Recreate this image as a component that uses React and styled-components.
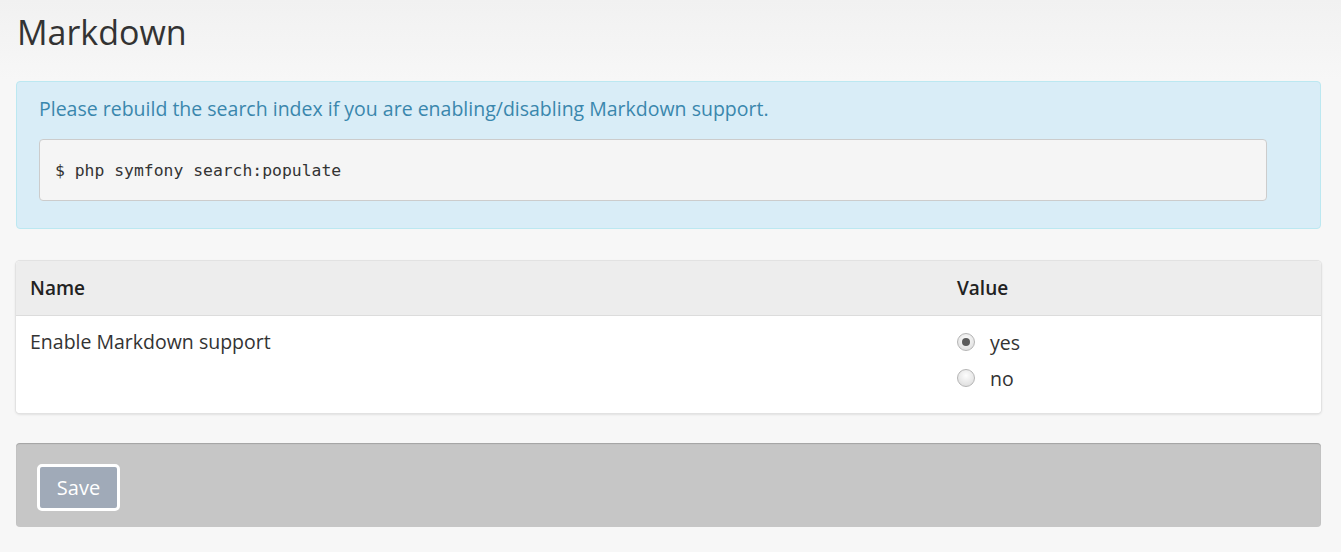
import styled, { createGlobalStyle } from "styled-components";

const Global = createGlobalStyle`
	html, body {
		margin: 0;
		padding: 0;
	}
	body {
		background: linear-gradient(#f1f1f1, #f7f7f7 80px);
		font-family: "Open Sans", "Liberation Sans", sans-serif;
		color: #333;
		min-height: 552px;
	}
`;

// --------------------------------------------------

const Page = styled.div`
	padding: 8px 20px 25px 16px;
	display: flex;
	flex-direction: column;
`;

const Title = styled.h1`
	margin: 0 0 0 1px;
	font-size: 34px;
	font-weight: 400;
	line-height: 48px;
	color: #333;
`;

const Alert = styled.div`
	margin-top: 25px;
	background: #d9edf7;
	border: 1px solid #bce8f1;
	border-radius: 4px;
	padding: 13px 53px 27px 22px;
	color: #3a87ad;
	font-size: 19.5px;
`;

const AlertText = styled.p`
	margin: 0;
	line-height: 28px;
`;

const Pre = styled.pre`
	margin: 16px 0 0 0;
	background: #f5f5f5;
	border: 1.5px solid #ccc;
	border-radius: 4px;
	padding: 0 15px;
	height: 62px;
	box-sizing: border-box;
	display: flex;
	align-items: center;
	font-family: "DejaVu Sans Mono", "Liberation Mono", monospace;
	font-size: 16.4px;
	color: #333;
`;

// --------------------------------------------------

const Table = styled.div`
	margin-top: 32px;
	background: #fff;
	border-radius: 4px;
	box-shadow: 0 0 0 1px #e2e2e2, 0 1px 3px rgba(0, 0, 0, 0.18);
	overflow: hidden;
`;

const Row = styled.div`
	display: grid;
	grid-template-columns: 927px 1fr;
	background: ${ ({ head }) => head ? "#ededed" : "#fff" };
	border-bottom: ${ ({ head }) => head ? "1px solid #dcdcdc" : "none" };
	height: ${ ({ head }) => head ? "54px" : "97px" };
	align-items: ${ ({ head }) => head ? "center" : "start" };
`;

const Cell = styled.div`
	padding: ${ ({ head }) => head ? "0 14px" : "12px 14px" };
	font-size: ${ ({ head }) => head ? "19px" : "19.5px" };
	font-weight: ${ ({ head }) => head ? 600 : 400 };
	color: ${ ({ head }) => head ? "#222" : "#333" };
	line-height: 28px;
`;

const Options = styled.div`
	display: flex;
	flex-direction: column;
	gap: 8px;
	margin-top: 1px;
`;

const Option = styled.label`
	display: flex;
	align-items: center;
	gap: 15px;
	font-size: 19.5px;
	line-height: 28px;
	color: #333;
`;

const Radio = styled.span`
	width: 18px;
	height: 18px;
	border-radius: 50%;
	box-sizing: border-box;
	border: 1px solid #b5b5b5;
	background: radial-gradient(circle at 50% 35%, #fdfdfd, #d8d8d8);
	display: flex;
	align-items: center;
	justify-content: center;
	margin-top: -2px;

	&::after {
		content: "";
		width: 8px;
		height: 8px;
		border-radius: 50%;
		background: ${ ({ checked }) => checked ? "#5a5a5a" : "transparent" };
	}
`;

// --------------------------------------------------

const Actions = styled.div`
	margin-top: 30px;
	background: #c6c6c6;
	border-radius: 4px;
	box-shadow: inset 0 1px 1px rgba(0, 0, 0, 0.18);
	padding: 21px 20px 16px 21px;
	display: flex;
`;

const SaveButton = styled.button`
	background: #a0aab8;
	border: 3px solid #fff;
	border-radius: 5px;
	color: #fff;
	font-family: "Open Sans", "Liberation Sans", sans-serif;
	font-size: 20px;
	height: 47px;
	width: 83px;
	padding: 0;
	cursor: pointer;
`;

// --------------------------------------------------

const App = () => (
	<>
		<Global />
		<Page>
			<Title>Markdown</Title>

			<Alert>
				<AlertText>Please rebuild the search index if you are enabling/disabling Markdown support.</AlertText>
				<Pre>$ php symfony search:populate</Pre>
			</Alert>

			<Table>
				<Row head>
					<Cell head>Name</Cell>
					<Cell head>Value</Cell>
				</Row>
				<Row>
					<Cell>Enable Markdown support</Cell>
					<Cell>
						<Options>
							<Option><Radio checked />yes</Option>
							<Option><Radio />no</Option>
						</Options>
					</Cell>
				</Row>
			</Table>

			<Actions>
				<SaveButton>Save</SaveButton>
			</Actions>
		</Page>
	</>
);

export default App;
